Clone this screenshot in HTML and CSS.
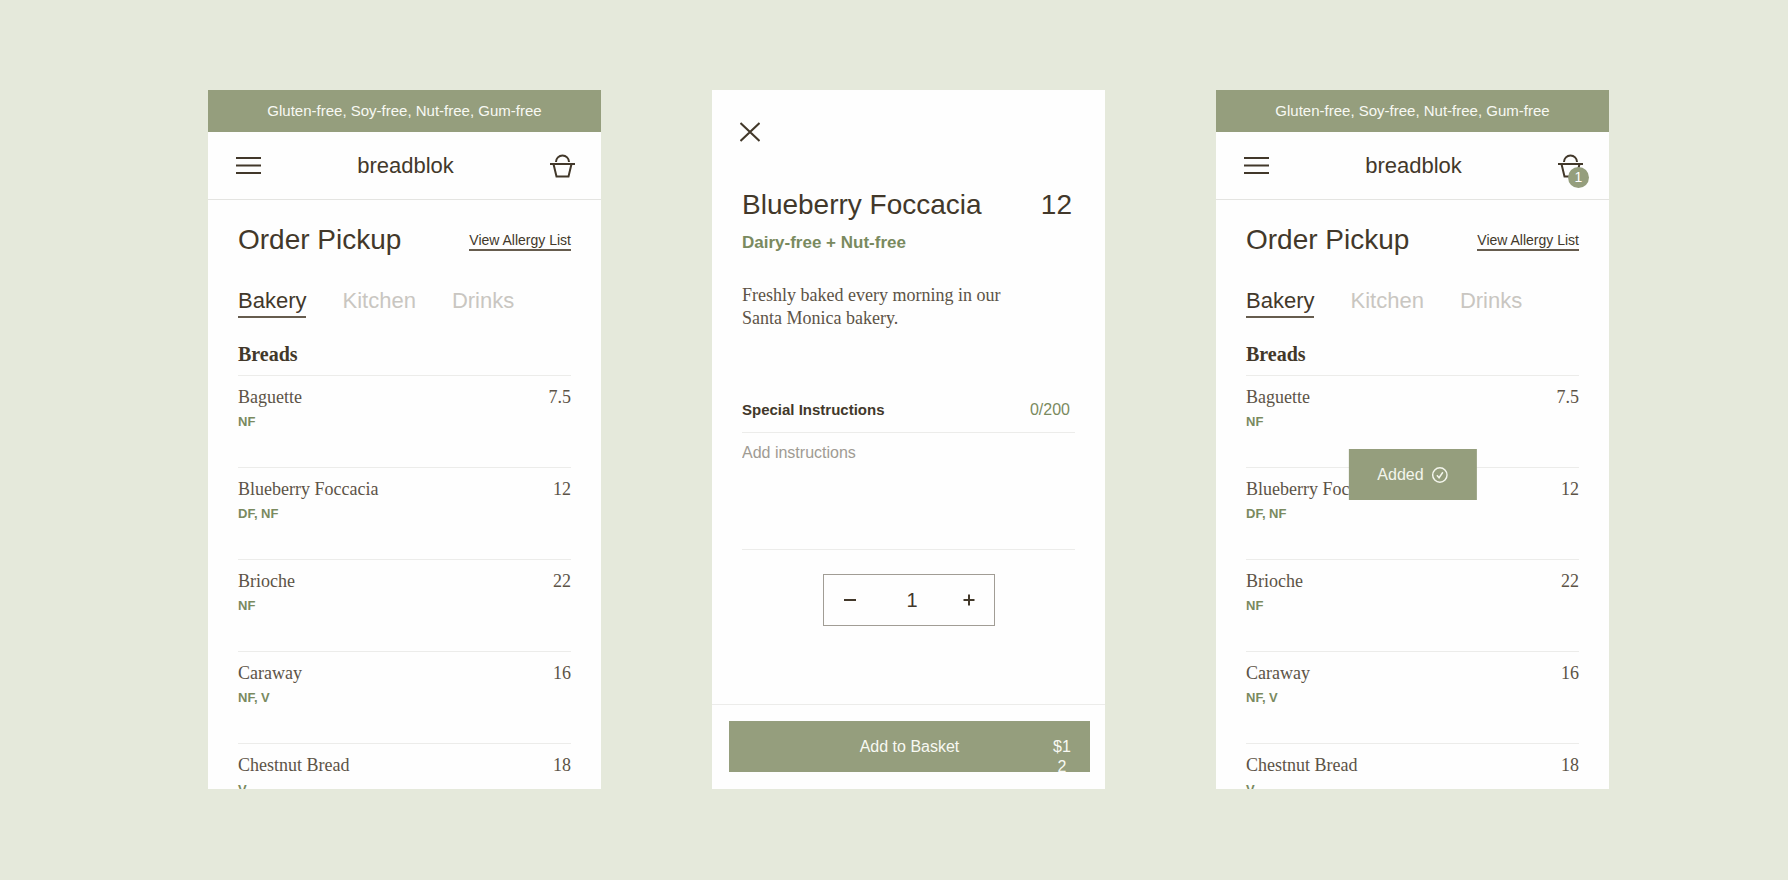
FILE: index.html
```html
<!DOCTYPE html>
<html lang="en">
<head>
<meta charset="utf-8">
<meta name="viewport" content="width=device-width, initial-scale=1">
<title>breadblok – Order Pickup</title>
<link rel="stylesheet" href="styles.css">
</head>
<body>
<main class="board">
  <section class="screen">
    <p class="banner">Gluten-free, Soy-free, Nut-free, Gum-free</p>
    <header class="topbar">
      <button class="icon-button" aria-label="Menu">
        <svg width="25" height="19" viewBox="0 0 25 19"><path d="M0 2h25M0 9.5h25M0 17h25"/></svg>
      </button>
      <a class="brand" href="#">breadblok</a>
      <button class="icon-button" aria-label="Basket">
        <svg width="25" height="24" viewBox="0 0 25 24"><path d="M0 10h25M3.5 10l3 12.5h12l3-12.500M6 8a6.500 6.500 0 0 1 13 0"/></svg>
      </button>
    </header>
    <div class="menu">
      <div class="title-row">
        <h1 class="title">Order Pickup</h1>
        <a class="allergy" href="#">View Allergy List</a>
      </div>
      <nav class="tabs">
        <button class="tab tab-active">Bakery</button>
        <button class="tab">Kitchen</button>
        <button class="tab">Drinks</button>
      </nav>
      <h2 class="group">Breads</h2>
      <ul class="items">
        <li class="item"><div class="item-line"><span>Baguette</span><span>7.5</span></div><span class="tags">NF</span></li>
        <li class="item"><div class="item-line"><span>Blueberry Foccacia</span><span>12</span></div><span class="tags">DF, NF</span></li>
        <li class="item"><div class="item-line"><span>Brioche</span><span>22</span></div><span class="tags">NF</span></li>
        <li class="item"><div class="item-line"><span>Caraway</span><span>16</span></div><span class="tags">NF, V</span></li>
        <li class="item"><div class="item-line"><span>Chestnut Bread</span><span>18</span></div><span class="tags">V</span></li>
      </ul>
    </div>
  </section>

  <section class="screen">
    <div class="detail">
      <button class="icon-button close" aria-label="Close">
        <svg width="20" height="20" viewBox="0 0 20 20"><path d="M.5 1l19 18M19.5 1l-19 18"/></svg>
      </button>
      <div class="title-row">
        <h1 class="title">Blueberry Foccacia</h1>
        <span class="title detail-price">12</span>
      </div>
      <p class="diet">Dairy-free + Nut-free</p>
      <p class="description">Freshly baked every morning in our Santa Monica bakery.</p>
      <div class="notes-head">
        <label class="notes-label" for="notes">Special Instructions</label>
        <span class="notes-count">0/200</span>
      </div>
      <textarea class="notes" id="notes" maxlength="200" placeholder="Add instructions"></textarea>
      <div class="stepper">
        <button class="step" aria-label="Remove one"><svg width="12" height="12" viewBox="0 0 12 12"><path d="M0 6h12"/></svg></button>
        <output class="quantity">1</output>
        <button class="step" aria-label="Add one"><svg width="12" height="12" viewBox="0 0 12 12"><path d="M.5 6h11M6 .5v11"/></svg></button>
      </div>
    </div>
    <footer class="checkout">
      <button class="add"><span>Add to Basket</span><span class="total">$12</span></button>
    </footer>
  </section>

  <section class="screen">
    <p class="banner">Gluten-free, Soy-free, Nut-free, Gum-free</p>
    <header class="topbar">
      <button class="icon-button" aria-label="Menu">
        <svg width="25" height="19" viewBox="0 0 25 19"><path d="M0 2h25M0 9.5h25M0 17h25"/></svg>
      </button>
      <a class="brand" href="#">breadblok</a>
      <button class="icon-button" aria-label="Basket, 1 item">
        <svg width="25" height="24" viewBox="0 0 25 24"><path d="M0 10h25M3.5 10l3 12.5h12l3-12.500M6 8a6.500 6.500 0 0 1 13 0"/></svg>
        <span class="badge">1</span>
      </button>
    </header>
    <div class="menu">
      <div class="title-row">
        <h1 class="title">Order Pickup</h1>
        <a class="allergy" href="#">View Allergy List</a>
      </div>
      <nav class="tabs">
        <button class="tab tab-active">Bakery</button>
        <button class="tab">Kitchen</button>
        <button class="tab">Drinks</button>
      </nav>
      <h2 class="group">Breads</h2>
      <ul class="items">
        <li class="item"><div class="item-line"><span>Baguette</span><span>7.5</span></div><span class="tags">NF</span></li>
        <li class="item"><div class="item-line"><span>Blueberry Foccacia</span><span>12</span></div><span class="tags">DF, NF</span></li>
        <li class="item"><div class="item-line"><span>Brioche</span><span>22</span></div><span class="tags">NF</span></li>
        <li class="item"><div class="item-line"><span>Caraway</span><span>16</span></div><span class="tags">NF, V</span></li>
        <li class="item"><div class="item-line"><span>Chestnut Bread</span><span>18</span></div><span class="tags">V</span></li>
      </ul>
    </div>
    <div class="toast" role="status">
      <span>Added</span>
      <svg width="16" height="16" viewBox="0 0 16 16"><circle cx="8" cy="8" r="7.2"/><path d="M5 8.300l2.200 2.400L11 5.300"/></svg>
    </div>
  </section>
</main>
</body>
</html>
```

FILE: styles.css
```css
:root {
  --sage: #959e7d;
  --leaf: #7a8a5f;
  --ink: #42382a;
  --ink-soft: #5c5346;
  --line: #ececea;
  --sans: "Liberation Sans", Arial, sans-serif;
  --serif: "Liberation Serif", "Times New Roman", serif;
}

* {
  box-sizing: border-box;
}

body,
h1,
h2,
p,
ul {
  margin: 0;
  padding: 0;
}

body {
  background: #e5e9db;
  color: var(--ink);
  font-family: var(--sans);
}

button {
  padding: 0;
  border: 0;
  background: none;
  color: inherit;
  font: inherit;
  cursor: pointer;
}

svg {
  display: block;
  fill: none;
  stroke: currentColor;
  stroke-width: 2;
}

.board {
  display: grid;
  grid-template-columns: repeat(3, minmax(0, 1fr));
  gap: 111px;
  height: 100vh;
  padding: 90px 179px 91px 208px;
}

.screen {
  position: relative;
  display: flex;
  flex-direction: column;
  min-height: 0;
  overflow: hidden;
  background: #fefefe;
}

.banner {
  background: var(--sage);
  color: #f8f9f3;
  font-size: 15px;
  line-height: 42px;
  text-align: center;
}

.topbar {
  display: flex;
  align-items: center;
  justify-content: space-between;
  padding: 20px 26px 20px 28px;
  border-bottom: 1px solid #e4e4e1;
}

.icon-button {
  position: relative;
}

.brand {
  color: inherit;
  font-size: 22px;
  line-height: 27px;
  text-decoration: none;
}

.badge {
  position: absolute;
  top: 13px;
  left: 10px;
  width: 21px;
  border-radius: 50%;
  background: var(--sage);
  color: #fff;
  font-size: 14px;
  line-height: 21px;
  text-align: center;
}

.menu {
  padding: 22px 30px 0;
}

.title-row {
  display: flex;
  align-items: center;
  justify-content: space-between;
}

.title {
  font-size: 28px;
  font-weight: 400;
  line-height: 36px;
}

.allergy {
  margin-top: 2px;
  border-bottom: 2px solid #665c4e;
  color: inherit;
  font-size: 14px;
  line-height: 18px;
  text-decoration: none;
}

.tabs {
  display: flex;
  gap: 36px;
  margin-top: 29px;
}

.tab {
  padding-bottom: 1px;
  border-bottom: 2px solid transparent;
  color: #c9c6c1;
  font-size: 22px;
  line-height: 28px;
}

.tab-active {
  border-color: #665c4e;
  color: var(--ink);
}

.group {
  margin-top: 24px;
  padding-bottom: 9px;
  font-family: var(--serif);
  font-size: 20px;
  line-height: 24px;
}

.items {
  list-style: none;
}

.item {
  min-height: 92px;
  padding-top: 9px;
  border-top: 1px solid var(--line);
}

.item-line {
  display: flex;
  justify-content: space-between;
  color: var(--ink-soft);
  font-family: var(--serif);
  font-size: 18px;
  line-height: 24px;
}

.tags {
  display: block;
  margin-top: 3px;
  color: var(--leaf);
  font-size: 13px;
  font-weight: 700;
  line-height: 20px;
}

.detail {
  display: flex;
  flex: 1;
  flex-direction: column;
  padding: 32px 30px 0;
}

.close {
  align-self: flex-start;
  margin: 0 0 45px -2px;
}

.detail-price {
  padding-right: 3px;
}

.diet {
  margin-top: 9px;
  color: var(--leaf);
  font-size: 17px;
  font-weight: 700;
  line-height: 22px;
}

.description {
  max-width: 280px;
  margin-top: 30px;
  color: var(--ink-soft);
  font-family: var(--serif);
  font-size: 18px;
  line-height: 23px;
}

.notes-head {
  display: flex;
  align-items: center;
  justify-content: space-between;
  margin-top: 70px;
  padding: 0 5px 12px 0;
  line-height: 20px;
}

.notes-label {
  font-size: 15px;
  font-weight: 700;
}

.notes-count {
  color: var(--leaf);
  font-size: 16px;
}

.notes {
  height: 118px;
  padding: 10px 0;
  border: solid var(--line);
  border-width: 1px 0;
  background: none;
  color: var(--ink);
  font-family: var(--sans);
  font-size: 16px;
  line-height: 20px;
  resize: none;
}

.notes::placeholder {
  color: #a09b93;
}

.stepper {
  display: flex;
  align-items: center;
  align-self: center;
  justify-content: space-between;
  width: 172px;
  margin-top: 24px;
  padding: 0 19px 0 20px;
  border: 1px solid #a19d95;
  font-size: 20px;
  line-height: 50px;
}

.quantity {
  padding-left: 6px;
}

.checkout {
  padding: 16px 15px 17px 17px;
  border-top: 1px solid var(--line);
}

.add {
  position: relative;
  width: 100%;
  overflow: hidden;
  background: var(--sage);
  color: #f8f9f3;
  font-size: 16px;
  line-height: 51px;
}

.total {
  position: absolute;
  top: 16px;
  right: 18px;
  width: 20px;
  line-height: 20px;
  text-align: center;
  word-break: break-all;
}

.toast {
  position: absolute;
  top: 359px;
  left: 50%;
  display: flex;
  align-items: center;
  gap: 8px;
  padding: 0 29px;
  background: var(--sage);
  color: #f3f5ec;
  font-size: 16px;
  line-height: 51px;
  transform: translateX(-50%);
}

.toast svg {
  stroke-width: 1.5;
}
```
